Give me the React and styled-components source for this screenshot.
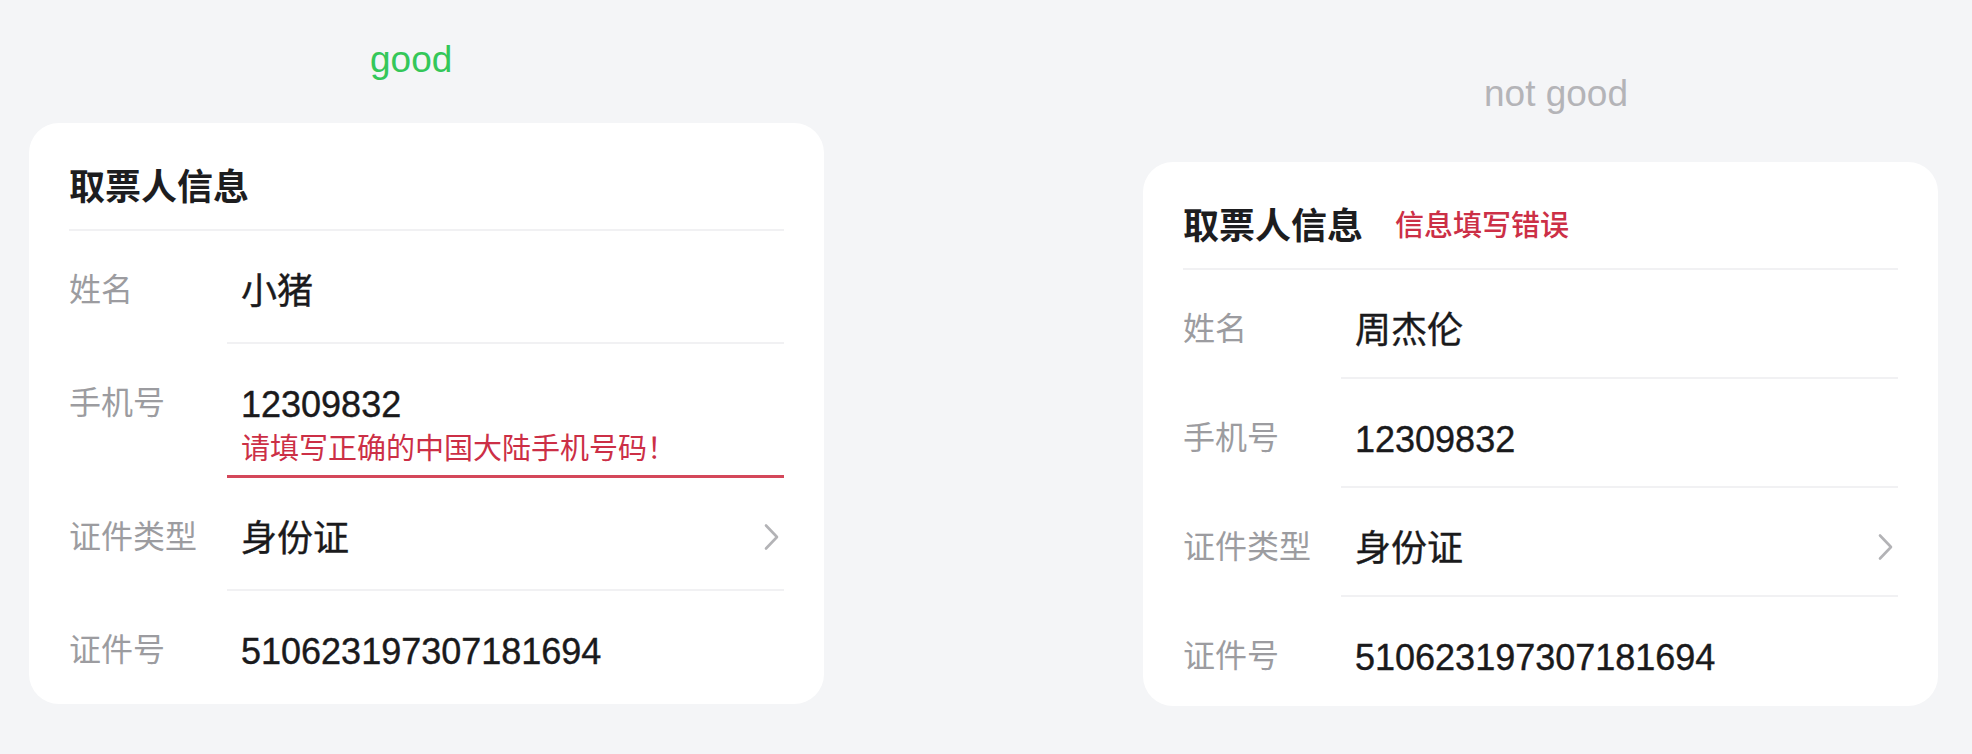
import React from 'react'
import styled, { createGlobalStyle } from 'styled-components'

const GlobalStyle = createGlobalStyle`
  html, body {
    margin: 0;
    padding: 0;
    background: #f4f5f7;
  }
  body {
    font-family: "Liberation Sans", "Noto Sans CJK SC", sans-serif;
    -webkit-font-smoothing: antialiased;
  }
`

const rowsGood = [
  { label: '姓名', value: '小猪' },
  { label: '手机号', value: '12309832', error: '请填写正确的中国大陆手机号码！' },
  { label: '证件类型', value: '身份证', select: true },
  { label: '证件号', value: '510623197307181694' },
]

const rowsBad = [
  { label: '姓名', value: '周杰伦' },
  { label: '手机号', value: '12309832' },
  { label: '证件类型', value: '身份证', select: true },
  { label: '证件号', value: '510623197307181694' },
]

function Chevron() {
  return (
    <StChevron width="17" height="28" viewBox="0 0 17 28">
      <path d="M3 2.5 L14 14 L3 25.5" fill="none" stroke="#b3b3b6" strokeWidth="2.6" strokeLinecap="round" strokeLinejoin="round" />
    </StChevron>
  )
}

function InfoCard({ rows, tag, rowBottom }) {
  return (
    <StCard>
      <StHeader>
        <StTitle>取票人信息</StTitle>
        {tag && <StTag>{tag}</StTag>}
      </StHeader>
      {rows.map((row, i) => (
        <StRow key={row.label}>
          <StLabel>{row.label}</StLabel>
          <StField $error={!!row.error} $last={i === rows.length - 1} $bottom={rowBottom}>
            <StFieldBody>
              <StValue>{row.value}</StValue>
              {row.error && <StError>{row.error}</StError>}
            </StFieldBody>
            {row.select && <Chevron />}
          </StField>
        </StRow>
      ))}
    </StCard>
  )
}

export default function App() {
  return (
    <>
      <GlobalStyle />
      <StPage>
        <StColumn $top={40}>
          <StCaption $color="#34c759" $gap={43}>good</StCaption>
          <InfoCard rows={rowsGood} rowBottom={28} />
        </StColumn>
        <StColumn $top={74}>
          <StCaption $color="#b4b4b8" $gap={48}>not good</StCaption>
          <InfoCard rows={rowsBad} tag="信息填写错误" rowBottom={24} />
        </StColumn>
      </StPage>
    </>
  )
}

const StPage = styled.div`
  display: flex;
  align-items: flex-start;
  gap: 319px;
  padding-left: 29px;
  min-height: 754px;
  box-sizing: border-box;
`

const StColumn = styled.div`
  width: 795px;
  display: flex;
  flex-direction: column;
  padding-top: ${(p) => p.$top}px;
`

const StCaption = styled.div`
  padding-left: 341px;
  font-size: 37px;
  line-height: 40px;
  color: ${(p) => p.$color};
  margin-bottom: ${(p) => p.$gap}px;
`

const StCard = styled.div`
  background: #ffffff;
  border-radius: 30px;
  padding: 0 40px;
`

const StHeader = styled.div`
  display: flex;
  align-items: center;
  height: 108px;
  box-sizing: border-box;
  padding-top: 16px;
  border-bottom: 2px solid #f1f1f3;
`

const StTitle = styled.div`
  font-size: 36px;
  font-weight: 600;
  color: #1d1d1f;
`

const StTag = styled.div`
  margin-left: 32px;
  font-size: 29px;
  font-weight: 500;
  color: #cc2f46;
`

const StRow = styled.div`
  display: flex;
`

const StLabel = styled.div`
  width: 158px;
  flex-shrink: 0;
  padding-top: 37px;
  font-size: 32px;
  line-height: 44px;
  color: #9c9ca0;
`

const StField = styled.div`
  flex: 1;
  display: flex;
  align-items: flex-start;
  justify-content: space-between;
  padding: 39px 0 ${(p) => (p.$error ? 8 : p.$bottom)}px 14px;
  border-bottom: ${(p) => (p.$error ? '3px solid #d4475a' : p.$last ? '2px solid transparent' : '2px solid #f1f1f3')};
`

const StFieldBody = styled.div`
  display: flex;
  flex-direction: column;
`

const StValue = styled.div`
  font-size: 36px;
  line-height: 44px;
  color: #1a1a1c;
  -webkit-text-stroke: 0.4px #1a1a1c;
`

const StError = styled.div`
  margin-top: 4px;
  font-size: 29px;
  line-height: 36px;
  color: #cc2f46;
`

const StChevron = styled.svg`
  margin-top: 6px;
  margin-right: 4px;
`
